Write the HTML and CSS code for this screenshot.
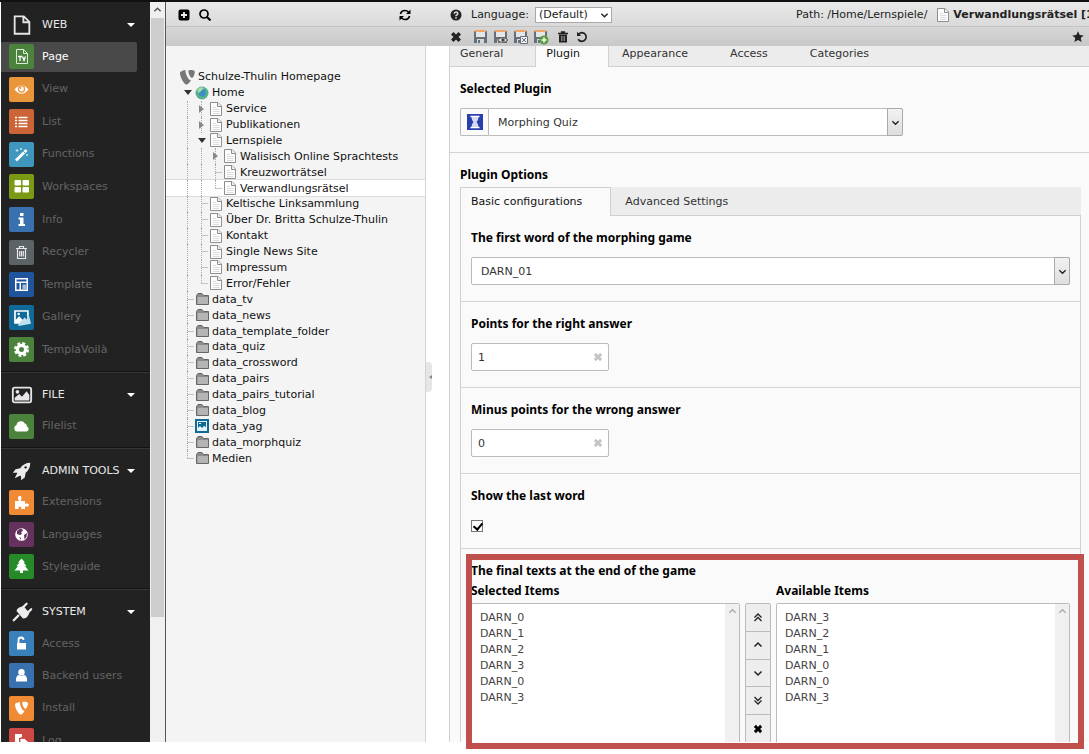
FILE: index.html
```html
<!DOCTYPE html>
<html lang="en">
<head>
    <meta charset="UTF-8">
    <meta name="viewport" content="width=device-width, initial-scale=1.0">
    <title>TYPO3 Backend - Verwandlungsrätsel</title>
    <link rel="stylesheet" href="styles.css">
</head>
<body>
    <svg class="sprite" aria-hidden="true">
        <symbol id="i-page" viewBox="0 0 16 16">
            <path d="M2.500 1.500h7.500L13.500 5v9.500h-11z" fill="#fdfdfd" stroke="#8e8e8e" stroke-width="1"/>
            <path d="M9.500 1.500V5.500H13.500" fill="#eee" stroke="#8e8e8e"/>
            <path d="M5 6.500h3M5 8.500h6.500M5 10.500h6.500M5 12.500h6.500" stroke="#dcdcdc"/>
        </symbol>
        <symbol id="i-folder" viewBox="0 0 16 16">
            <path d="M2.500 13.500V4.500l1.500-2h4l1.500 2h5v9z" fill="#8c8c8c" stroke="#666"/>
            <path d="M3.500 6h10.500v7h-10.500z" fill="#b4b4b4"/>
        </symbol>
        <symbol id="i-typo3" viewBox="0 0 16 16">
            <path d="M11 10.500c-.3.100-.5.100-.8.100-2 0-4.700-6.600-4.700-8.800 0-.8.200-1 .4-1.300C3.500.8 1 1.700.3 2.600c-.2.200-.3.600-.3 1.100C0 7.100 3.800 15 6.500 15c1.300 0 3.300-2 4.500-4.500M9.900.4c2.500 0 4.900.4 4.900 1.800 0 2.800-1.800 6.200-2.700 6.200-1.600 0-3.700-4.500-3.700-6.700 0-1 .4-1.300 1.500-1.300" transform="translate(0 .5)"/>
        </symbol>
        <symbol id="i-x" viewBox="0 0 12 12">
            <path d="M3.500 1L6 3.500 8.500 1 11 3.500 8.500 6 11 8.500 8.500 11 6 8.500 3.500 11 1 8.500 3.500 6 1 3.500z"/>
        </symbol>
        <symbol id="i-up" viewBox="0 0 10 10"><path d="M1.500 6.500L5 3l3.500 3.500" fill="none" stroke="currentColor" stroke-width="1.500"/></symbol>
        <symbol id="i-down" viewBox="0 0 10 10"><path d="M1.500 3.500L5 7l3.500-3.500" fill="none" stroke="currentColor" stroke-width="1.500"/></symbol>
        <symbol id="i-top" viewBox="0 0 10 10"><path d="M1.500 5.500L5 2l3.500 3.500M1.500 9L5 5.500 8.500 9" fill="none" stroke="currentColor" stroke-width="1.300"/></symbol>
        <symbol id="i-bottom" viewBox="0 0 10 10"><path d="M1.500 1L5 4.500 8.500 1M1.500 4.500L5 8l3.500-3.500" fill="none" stroke="currentColor" stroke-width="1.300"/></symbol>
        <symbol id="i-save" viewBox="0 0 16 16">
            <path d="M1 2h13v12H1z" fill="#66707a"/>
            <path d="M3 2h9v6H3z" fill="#e4e6e8"/>
            <path d="M2 1h11v2H2z" fill="#f2a569"/>
            <path d="M4 10h7v4H4z" fill="#d4d7da"/>
            <path d="M5 11h2v3H5z" fill="#66707a"/>
        </symbol>
        <symbol id="i-gallery" viewBox="0 0 16 16">
            <path d="M1 1h13v12H1z" fill="#fff"/>
            <path d="M14 5l2 8-11 2-.5-2z" fill="#bfe0ee"/>
            <path d="M2.500 2.500h10v7l-2-2-2 2-3-3-3 3z" fill="#0f6a97"/>
            <circle cx="5" cy="4.500" r="1.100" fill="#fff"/>
        </symbol>
    </svg>

    <div class="screen">
        <div class="backend">

            <!-- Module menu -->
            <nav class="modules">
                <section class="module-group rows-11">
                    <button type="button" class="group-head">
                        <svg class="group-icon" viewBox="0 0 24 24"><path d="M4 2.500h10l6 6v13H4z M13.500 2.500v6.500h6.500" fill="none" stroke="#e8e4e8" stroke-width="2"/></svg>
                        <span>WEB</span><i class="caret"></i>
                    </button>
                    <a href="#" class="module active">
                        <svg class="module-icon green" viewBox="0 0 25 25"><path d="M7.500 5.500h7l4 4v10h-11z M14.500 5.500v4h4" fill="none" stroke="#dce9d8"/><path d="M9 12.500h4M11 12.500v4.500M13.500 12.500l1.500 4 1.500-4" fill="none" stroke="#fff" stroke-width="1.300"/></svg>
                        Page
                    </a>
                    <a href="#" class="module">
                        <svg class="module-icon orange" viewBox="0 0 25 25"><path d="M5.500 12.500q7-8.500 14 0-7 8.500-14 0z" fill="#fff"/><circle cx="12.500" cy="12" r="3.700" fill="#e8953b"/><circle cx="12.500" cy="12" r="2.400" fill="#fff"/><circle cx="11.500" cy="11" r="1" fill="#e8953b"/></svg>
                        View
                    </a>
                    <a href="#" class="module">
                        <svg class="module-icon rust" viewBox="0 0 25 25"><path d="M6 8.500h2M6 11.500h2M6 14.500h2M6 17.500h2M9.500 8.500h9M9.500 11.500h9M9.500 14.500h9M9.500 17.500h9" stroke="#fff" stroke-width="1.500"/></svg>
                        List
                    </a>
                    <a href="#" class="module">
                        <svg class="module-icon sky" viewBox="0 0 25 25"><path d="M6 17.500L16.500 7l2 2L8 19.500z" fill="#fff"/><path d="M14.200 9.300l2 2" stroke="#4097bd"/><path d="M8 7v3M6.500 8.500h3M12 6v2M11 7h2M18 12v2M17 13h2" stroke="#d8ecf5" stroke-width=".8"/></svg>
                        Functions
                    </a>
                    <a href="#" class="module">
                        <svg class="module-icon lime" viewBox="0 0 25 25"><g fill="#fff"><rect x="5.500" y="6" width="6.500" height="5.500" rx="1"/><rect x="13.500" y="6" width="6.500" height="5.500" rx="1"/><rect x="5.500" y="13" width="6.500" height="5.500" rx="1"/><rect x="13.500" y="13" width="6.500" height="5.500" rx="1"/></g></svg>
                        Workspaces
                    </a>
                    <a href="#" class="module">
                        <svg class="module-icon blue" viewBox="0 0 25 25"><path d="M11 6h3.500v3H11zM9.500 10.500h5V17H16v2H9.500v-2H11v-4.500H9.500z" fill="#fff"/></svg>
                        Info
                    </a>
                    <a href="#" class="module">
                        <svg class="module-icon gray" viewBox="0 0 25 25"><path d="M7 8.500h11M10.500 8V6.500h4V8M8.500 9v9.500h8V9M10.700 11v5.500M12.500 11v5.500M14.300 11v5.500" fill="none" stroke="#e4e6e7" stroke-width="1.200"/></svg>
                        Recycler
                    </a>
                    <a href="#" class="module">
                        <svg class="module-icon navy" viewBox="0 0 25 25"><path d="M6 6h13v13H6z" fill="#fff"/><path d="M7.500 7.500h10v2h-10zM7.500 11h3v6.500h-3zM12 11h5.500v6.500H12z" fill="#1f559c"/><path d="M13.500 12.500h4v5h-4z" fill="#a7c0dd"/></svg>
                        Template
                    </a>
                    <a href="#" class="module">
                        <svg class="module-icon petrol" viewBox="0 0 25 25"><use href="#i-gallery" x="4" y="4" width="18" height="18"/></svg>
                        Gallery
                    </a>
                    <a href="#" class="module">
                        <svg class="module-icon green" viewBox="0 0 25 25"><circle cx="12.500" cy="12.500" r="5.800" fill="#fff"/><circle cx="12.500" cy="12.500" r="6" fill="none" stroke="#fff" stroke-width="3" stroke-dasharray="2.700 2.012"/><circle cx="12.500" cy="12.500" r="2.500" fill="#4b833c"/></svg>
                        TemplaVoilà
                    </a>
                </section>
                <section class="module-group rows-2">
                    <button type="button" class="group-head">
                        <svg class="group-icon" viewBox="0 0 24 24"><rect x="2" y="4" width="20" height="16" rx="2" fill="none" stroke="#e8e4e8" stroke-width="2"/><path d="M4 18v-3l5-4 3 3 5-6 3 4v6z" fill="#e8e4e8"/><circle cx="7" cy="8.500" r="2" fill="#e8e4e8"/></svg>
                        <span>FILE</span><i class="caret"></i>
                    </button>
                    <a href="#" class="module">
                        <svg class="module-icon green" viewBox="0 0 25 25"><path d="M8 17.500a3.300 3.300 0 0 1-.5-6.400 4.500 4.500 0 0 1 8.400-1.600 3 3 0 0 1 2 3A2.600 2.600 0 0 1 17.500 17.500z" fill="#fff"/></svg>
                        Filelist
                    </a>
                </section>
                <section class="module-group rows-4">
                    <button type="button" class="group-head">
                        <svg class="group-icon" viewBox="0 0 24 24"><path d="M21 3q-7 0-11 6l-5 1-3 4 5 0-1 2-2 4 4-2 2-1 1 1v4l4-3 1-5q5-4 5-11z" fill="#ececec"/><circle cx="16" cy="8" r="1.300" fill="#222"/></svg>
                        <span>ADMIN TOOLS</span><i class="caret"></i>
                    </button>
                    <a href="#" class="module">
                        <svg class="module-icon orange2" viewBox="0 0 25 25"><path d="M6 11h4q-1.500-2-1-3.500a1.800 1.800 0 0 1 3.500 0q.3 1.500-1 3.500H16v3.200q1-1 2.200-.8a1.700 1.700 0 0 1 0 3.400Q17 17 16 16v3h-4q.8-2.500-1.200-2.500T9.700 19H6z" fill="#fff"/></svg>
                        Extensions
                    </a>
                    <a href="#" class="module">
                        <svg class="module-icon purple" viewBox="0 0 25 25"><circle cx="12.500" cy="12.500" r="6.300" fill="#fff"/><path d="M8 9q3-3 5-2l1 2-2 1 1 2-2 1-3-1zM15 13l3-2-.5 4-2 2.500zM10 15l2 1v2z" fill="#653260"/></svg>
                        Languages
                    </a>
                    <a href="#" class="module">
                        <svg class="module-icon forest" viewBox="0 0 25 25"><path d="M12.500 4.500l3.500 4h-1.500l3 3.500h-1.500l3.500 4.500h-5.500V19h-3v-2.500H5.500L9 12H7.500l3-3.500H9z" fill="#fff"/></svg>
                        Styleguide
                    </a>
                </section>
                <section class="module-group rows-5">
                    <button type="button" class="group-head">
                        <svg class="group-icon" viewBox="0 0 24 24"><path d="M6 11l7 8q5 0 7-6l-6-7q-7 0-8 5z" fill="#ececec"/><path d="M12 8l5-5M17 14l5-5M8 16l-5 5" stroke="#ececec" stroke-width="2.500" stroke-linecap="round"/></svg>
                        <span>SYSTEM</span><i class="caret"></i>
                    </button>
                    <a href="#" class="module">
                        <svg class="module-icon azure" viewBox="0 0 25 25"><path d="M8 12h9v6.500H8z" fill="#fff"/><path d="M9.500 12V9q0-2.500 2.500-2.500T14.500 9" fill="none" stroke="#fff" stroke-width="1.800"/></svg>
                        Access
                    </a>
                    <a href="#" class="module">
                        <svg class="module-icon blue" viewBox="0 0 25 25"><circle cx="12.500" cy="9.200" r="3.200" fill="#fff"/><path d="M7 18.500q-.5-6 3-6.500 2.500 1.500 5 0 3.500.5 3 6.500z" fill="#fff"/></svg>
                        Backend users
                    </a>
                    <a href="#" class="module">
                        <svg class="module-icon orange2" viewBox="0 0 25 25"><use href="#i-typo3" x="6" y="5" width="14" height="14" fill="#fff"/></svg>
                        Install
                    </a>
                    <a href="#" class="module">
                        <svg class="module-icon red" viewBox="0 0 25 25"><path d="M6 6h7v3l-3 1v6H6z" fill="#fff"/><path d="M11 10.500h4.500l3.500 3V20h-8z" fill="#fff" stroke="#cc4a43" stroke-width=".8"/></svg>
                        Log
                    </a>
                </section>
            </nav>
            <div class="scrollbar">
                <svg class="scroll-up" viewBox="0 0 10 10"><use href="#i-up"/></svg>
                <div class="scroll-thumb"></div>
            </div>

            <!-- Page tree -->
            <aside class="tree-panel">
                <div class="bar bar-top">
                    <button type="button" class="icon-btn" aria-label="New page"><svg viewBox="0 0 12 12"><rect x=".5" y=".5" width="11" height="11" rx="2"/><path d="M6 3v6M3 6h6" stroke="#eee" stroke-width="1.800"/></svg></button>
                    <button type="button" class="icon-btn" aria-label="Filter"><svg viewBox="0 0 12 12"><circle cx="5" cy="5" r="4" fill="none" stroke="#000" stroke-width="1.700"/><path d="M8 8l3.500 3.500" stroke="#000" stroke-width="2"/></svg></button>
                    <button type="button" class="icon-btn push" aria-label="Refresh"><svg viewBox="0 0 12 12"><path d="M1.500 5q.8-3.500 4.500-3.500 2 0 3.500 1.500M10.500 7q-.8 3.500-4.500 3.500-2 0-3.500-1.500" fill="none" stroke="#000" stroke-width="1.700"/><path d="M11.500.5V5H7zM.5 11.500V7H5z"/></svg></button>
                </div>
                <div class="bar bar-bottom"></div>
                <div class="tree-body">
                    <ul class="tree">
                        <li><svg class="node-icon" fill="#777"><use href="#i-typo3"/></svg>Schulze-Thulin Homepage</li>
                        <li><button type="button" class="cell open" aria-label="Collapse"></button><svg class="node-icon" viewBox="0 0 16 16"><circle cx="8" cy="8" r="6.500" fill="#56b089"/><path d="M5 6q3-4 6-1l1 4-3 3-4-2z" fill="#3b8fc4"/><path d="M3 5q3-4 7-2L5 8z" fill="#a5dcae"/></svg>Home</li>
                        <li><i class="cell v"></i><button type="button" class="cell shut v" aria-label="Expand"></button><svg class="node-icon"><use href="#i-page"/></svg>Service</li>
                        <li><i class="cell v"></i><button type="button" class="cell shut v" aria-label="Expand"></button><svg class="node-icon"><use href="#i-page"/></svg>Publikationen</li>
                        <li><i class="cell v"></i><button type="button" class="cell open" aria-label="Collapse"></button><svg class="node-icon"><use href="#i-page"/></svg>Lernspiele</li>
                        <li><i class="cell v"></i><i class="cell v"></i><button type="button" class="cell shut v" aria-label="Expand"></button><svg class="node-icon"><use href="#i-page"/></svg>Walisisch Online Sprachtests</li>
                        <li><i class="cell v"></i><i class="cell v"></i><i class="cell v h"></i><svg class="node-icon"><use href="#i-page"/></svg>Kreuzworträtsel</li>
                        <li class="selected"><i class="cell v"></i><i class="cell v"></i><i class="cell l h"></i><svg class="node-icon"><use href="#i-page"/></svg>Verwandlungsrätsel</li>
                        <li><i class="cell v"></i><i class="cell v h"></i><svg class="node-icon"><use href="#i-page"/></svg>Keltische Linksammlung</li>
                        <li><i class="cell v"></i><i class="cell v h"></i><svg class="node-icon"><use href="#i-page"/></svg>Über Dr. Britta Schulze-Thulin</li>
                        <li><i class="cell v"></i><i class="cell v h"></i><svg class="node-icon"><use href="#i-page"/></svg>Kontakt</li>
                        <li><i class="cell v"></i><i class="cell v h"></i><svg class="node-icon"><use href="#i-page"/></svg>Single News Site</li>
                        <li><i class="cell v"></i><i class="cell v h"></i><svg class="node-icon"><use href="#i-page"/></svg>Impressum</li>
                        <li><i class="cell v"></i><i class="cell l h"></i><svg class="node-icon"><use href="#i-page"/></svg>Error/Fehler</li>
                        <li><i class="cell v h"></i><svg class="node-icon"><use href="#i-folder"/></svg>data_tv</li>
                        <li><i class="cell v h"></i><svg class="node-icon"><use href="#i-folder"/></svg>data_news</li>
                        <li><i class="cell v h"></i><svg class="node-icon"><use href="#i-folder"/></svg>data_template_folder</li>
                        <li><i class="cell v h"></i><svg class="node-icon"><use href="#i-folder"/></svg>data_quiz</li>
                        <li><i class="cell v h"></i><svg class="node-icon"><use href="#i-folder"/></svg>data_crossword</li>
                        <li><i class="cell v h"></i><svg class="node-icon"><use href="#i-folder"/></svg>data_pairs</li>
                        <li><i class="cell v h"></i><svg class="node-icon"><use href="#i-folder"/></svg>data_pairs_tutorial</li>
                        <li><i class="cell v h"></i><svg class="node-icon"><use href="#i-folder"/></svg>data_blog</li>
                        <li><i class="cell v h"></i><svg class="node-icon" viewBox="0 0 16 16"><path d="M1 1h14v14H1z" fill="#0f6a97"/><path d="M3 3h10v10H3z" fill="#e4f3fa"/><path d="M4 4h8v5l-2-1-2 2-2-2-2 2z" fill="#0f6a97"/><path d="M5 5h2v1H5z" fill="#fff"/></svg>data_yag</li>
                        <li><i class="cell v h"></i><svg class="node-icon"><use href="#i-folder"/></svg>data_morphquiz</li>
                        <li><i class="cell l h"></i><svg class="node-icon"><use href="#i-folder"/></svg>Medien</li>
                    </ul>
                </div>
                <button type="button" class="collapse" aria-label="Hide page tree"></button>
            </aside>

            <!-- Record editor -->
            <main class="editor">
                <div class="bar bar-top">
                    <button type="button" class="icon-btn help" aria-label="Help"><svg viewBox="0 0 12 12"><circle cx="6" cy="6" r="5.500" fill="#222"/><path d="M4.200 4.800Q4.300 3 6 3t1.800 1.600Q7.800 5.700 6 6.600V7.300M6 8.200v1.500" fill="none" stroke="#e4e4e4" stroke-width="1.500"/></svg></button>
                    <label for="language">Language:</label>
                    <span class="select-wrap language">
                        <select id="language"><option>(Default)</option></select>
                        <svg class="small-arrow" viewBox="0 0 10 10"><use href="#i-down"/></svg>
                    </span>
                    <div class="path">Path: /Home/Lernspiele/ <svg class="node-icon"><use href="#i-page"/></svg><b>Verwandlungsrätsel [155]</b></div>
                </div>
                <div class="bar bar-bottom">
                    <button type="button" class="icon-btn close" aria-label="Close"><svg fill="#222"><use href="#i-x"/></svg></button>
                    <button type="button" class="tool" aria-label="Save"><svg viewBox="0 0 16 16"><use href="#i-save"/></svg></button>
                    <button type="button" class="tool" aria-label="Save and view"><svg viewBox="0 0 16 16"><use href="#i-save"/><path d="M4.500 11q5-5 10.500 0-5.500 5-10.500 0z" fill="#ddd" stroke="#555"/><circle cx="10" cy="11" r="1.700" fill="#444"/></svg></button>
                    <button type="button" class="tool" aria-label="Save and close"><svg viewBox="0 0 16 16"><use href="#i-save"/><path d="M7.500 7.500h7v7h-7z" fill="#eef0f4" stroke="#66707a"/><path d="M9 9l4 4M13 9l-4 4" stroke="#66707a"/></svg></button>
                    <button type="button" class="tool" aria-label="Save and create new"><svg viewBox="0 0 16 16"><use href="#i-save"/><circle cx="11" cy="11" r="4.500" fill="#5a9e3c"/><path d="M11 8.500v5M8.500 11h5" stroke="#fff" stroke-width="1.500"/></svg></button>
                    <button type="button" class="icon-btn trash" aria-label="Delete"><svg viewBox="0 0 12 12"><path d="M1 2.500h10M4.500 2V1h3v1" fill="none" stroke="#222" stroke-width="1.300"/><path d="M2 3.500h8V11.500H2z" fill="#222"/><path d="M4.500 5v5M6 5v5M7.500 5v5" stroke="#aaa" stroke-width=".7"/></svg></button>
                    <button type="button" class="icon-btn" aria-label="Undo"><svg viewBox="0 0 12 12"><path d="M2.500 3.500Q4 1.700 6 1.700a4.300 4.300 0 1 1-3.800 6.500" fill="none" stroke="#222" stroke-width="1.700"/><path d="M1 .8V5h4.200z" fill="#222"/></svg></button>
                    <button type="button" class="icon-btn push star" aria-label="Bookmark"><svg viewBox="0 0 12 12"><path d="M6 .3l1.700 3.700 4 .4-3 2.700.9 4L6 9l-3.600 2.100.9-4-3-2.700 4-.4z" fill="#222"/></svg></button>
                </div>

                <div class="form">
                    <div class="tabs tabs-main">
                        <a href="#" class="tab">General</a>
                        <a href="#" class="tab current">Plugin</a>
                        <a href="#" class="tab">Appearance</a>
                        <a href="#" class="tab">Access</a>
                        <a href="#" class="tab">Categories</a>
                    </div>
                    <div class="pane pane-main">
                        <div class="field">
                            <label for="plugin">Selected Plugin</label>
                            <div class="input-group">
                                <span class="addon"><svg viewBox="0 0 16 16"><path d="M0 0h16v16H0z" fill="#2a3fae"/><path d="M3.500 2.500h9M3.500 13.500h9" stroke="#fff" stroke-width="1.500"/><path d="M4.500 3h7q0 3-2 5 2 2 2 5h-7q0-3 2-5-2-2-2-5z" fill="#d5daf2"/></svg></span>
                                <span class="select-wrap">
                                    <select id="plugin" class="control"><option>Morphing Quiz</option></select>
                                    <span class="arrow"><svg viewBox="0 0 10 10"><use href="#i-down"/></svg></span>
                                </span>
                            </div>
                        </div>
                        <div class="field options">
                            <h2>Plugin Options</h2>
                            <div class="tabs">
                                <a href="#" class="tab current">Basic configurations</a>
                                <a href="#" class="tab">Advanced Settings</a>
                            </div>
                            <div class="pane">
                                <div class="field">
                                    <label for="first-word">The first word of the morphing game</label>
                                    <span class="select-wrap">
                                        <select id="first-word" class="control"><option>DARN_01</option></select>
                                        <span class="arrow"><svg viewBox="0 0 10 10"><use href="#i-down"/></svg></span>
                                    </span>
                                </div>
                                <div class="field">
                                    <label for="points">Points for the right answer</label>
                                    <div class="clearable">
                                        <input type="text" id="points" class="control" value="1">
                                        <button type="button" class="clear" aria-label="Clear"><svg><use href="#i-x"/></svg></button>
                                    </div>
                                </div>
                                <div class="field">
                                    <label for="minus">Minus points for the wrong answer</label>
                                    <div class="clearable">
                                        <input type="text" id="minus" class="control" value="0">
                                        <button type="button" class="clear" aria-label="Clear"><svg><use href="#i-x"/></svg></button>
                                    </div>
                                </div>
                                <div class="field">
                                    <label for="show-last">Show the last word</label>
                                    <div class="check"><input type="checkbox" id="show-last" checked></div>
                                </div>
                                <div class="field">
                                    <h2>The final texts at the end of the game</h2>
                                    <div class="lists">
                                        <label for="selected">Selected Items</label>
                                        <label for="available" class="available">Available Items</label>
                                        <div class="list">
                                            <select id="selected" multiple>
                                                <option>DARN_0</option>
                                                <option>DARN_1</option>
                                                <option>DARN_2</option>
                                                <option>DARN_3</option>
                                                <option>DARN_0</option>
                                                <option>DARN_3</option>
                                            </select>
                                            <span class="list-scroll"><svg viewBox="0 0 10 10"><use href="#i-up"/></svg></span>
                                        </div>
                                        <div class="move">
                                            <button type="button" aria-label="Move to top"><svg><use href="#i-top"/></svg></button>
                                            <button type="button" aria-label="Move up"><svg><use href="#i-up"/></svg></button>
                                            <button type="button" aria-label="Move down"><svg><use href="#i-down"/></svg></button>
                                            <button type="button" aria-label="Move to bottom"><svg><use href="#i-bottom"/></svg></button>
                                            <button type="button" aria-label="Remove"><svg><use href="#i-x"/></svg></button>
                                        </div>
                                        <div class="list">
                                            <select id="available" multiple>
                                                <option>DARN_3</option>
                                                <option>DARN_2</option>
                                                <option>DARN_1</option>
                                                <option>DARN_0</option>
                                                <option>DARN_0</option>
                                                <option>DARN_3</option>
                                            </select>
                                            <span class="list-scroll"><svg viewBox="0 0 10 10"><use href="#i-up"/></svg></span>
                                        </div>
                                    </div>
                                </div>
                            </div>
                        </div>
                    </div>
                </div>
            </main>
        </div>
        <div class="highlight"></div>
    </div>
</body>
</html>
```
FILE: styles.css
```css
* {
    box-sizing: border-box;
}

body {
    margin: 0;
    background: #fff;
    font-family: "DejaVu Sans", Verdana, sans-serif;
    font-size: 11px;
    line-height: 16px;
    color: #222;
}

button,
input,
select {
    font: inherit;
    color: inherit;
    margin: 0;
}

button {
    padding: 0;
    border: none;
    background: none;
    cursor: pointer;
}

.sprite {
    display: none;
}

.screen {
    position: relative;
    height: 100vh;
    overflow: hidden;
    border-top: 2px solid #111;
}

.backend {
    display: flex;
    height: calc(100% - 12px);
    overflow: hidden;
}

/* Module menu */
.modules {
    flex: 0 0 149px;
    margin-left: 1px;
    background: #222;
    overflow: hidden;
}

.module-group {
    display: grid;
    grid-auto-rows: 1fr;
    padding: 5px 0;
    border-top: 1px solid #363636;
    border-bottom: 1px solid #141414;
}

.module-group:first-child {
    border-top: none;
    padding-top: 6px;
}

.rows-11 {
    height: 370px;
}

.rows-2 {
    height: 76px;
}

.rows-4 {
    height: 141px;
}

.rows-5 {
    height: 174px;
}

.group-head {
    display: flex;
    align-items: center;
    gap: 8px;
    padding: 2px 15px 0 9px;
    color: #e8e8e8;
    text-align: left;
    white-space: nowrap;
}

.group-icon {
    flex: none;
    width: 24px;
    height: 22px;
}

.caret {
    margin-left: auto;
    border: 4px solid transparent;
    border-top-color: #fff;
    border-bottom: none;
}

.group-head .caret {
    margin-left: auto;
}

.group-head span {
    margin-right: -8px;
}

.module {
    display: flex;
    align-items: center;
    gap: 8px;
    margin: 1px 13px 1px 0;
    padding-left: 8px;
    border-radius: 0 2px 2px 0;
    color: #646464;
    text-decoration: none;
}

.module.active {
    background: #494949;
    color: #fff;
}

.module-icon {
    width: 25px;
    height: 25px;
    border-radius: 2px;
}

.green { background: #4b833c; }
.orange { background: #e8953b; }
.orange2 { background: #f08a35; }
.rust { background: #cb6436; }
.sky { background: #4097bd; }
.lime { background: #7b9a14; }
.blue { background: #3970ae; }
.gray { background: #5c6366; }
.navy { background: #1f559c; }
.petrol { background: #0f6a97; }
.purple { background: #653260; }
.forest { background: #258a27; }
.azure { background: #3a80bb; }
.red { background: #cc4a43; }

.scrollbar {
    flex: 0 0 15px;
    display: flex;
    flex-direction: column;
    align-items: center;
    background: #f0f0f0;
}

.scroll-up {
    flex: none;
    width: 9px;
    height: 16px;
    color: #555;
}

.scroll-thumb {
    width: 13px;
    height: 81%;
    background: #cdcdcd;
}

/* Header bars of both panels */
.bar {
    display: flex;
    align-items: center;
}

.bar-top {
    height: 25px;
    padding: 2px 14px 0 12px;
    border-bottom: 1px solid #c4c4c4;
    background: linear-gradient(#e9e9e9, #dadada);
}

.bar-bottom {
    height: 19px;
    background: linear-gradient(#d6d6d6, #c8c8c8);
}

.icon-btn,
.icon-btn svg {
    display: block;
    width: 12px;
    height: 12px;
}

.push {
    margin-left: auto;
}

/* Page tree */
.tree-panel {
    position: relative;
    display: flex;
    flex-direction: column;
    flex: 0 0 262px;
    border-left: 1px solid #555;
    background: #fff;
}

.tree-panel .bar-top {
    gap: 9px;
    padding-right: 16px;
}

.tree-body {
    flex: 1;
    width: 260px;
    padding-top: 23px;
    border-right: 1px solid #d4d4d4;
    background: #f4f4f4;
}

.tree {
    display: grid;
    grid-auto-rows: 1fr;
    height: 397px;
    margin: 0;
    padding: 0;
    list-style: none;
    line-height: 15px;
    color: #111;
}

.tree li {
    display: flex;
    align-items: center;
    padding-left: 14px;
    white-space: nowrap;
}

.tree .selected {
    background: #fff;
    box-shadow: 0 -1px #ddd, 0 1px #ddd;
}

.node-icon {
    flex: none;
    width: 16px;
    height: 16px;
    margin: -1px 2px -1px 0;
}

.cell {
    position: relative;
    flex: 0 0 14px;
    align-self: stretch;
}

.v::before,
.l::before {
    content: "";
    position: absolute;
    left: 7px;
    top: 0;
    bottom: 0;
    border-left: 1px dotted #aaa;
}

.l::before {
    bottom: 50%;
}

.h {
    background: linear-gradient(90deg, transparent 50%, #c4c4c4 50%) center / 100% 1px no-repeat;
}

.open::after,
.shut::after {
    content: "";
    position: absolute;
    left: 4px;
    top: 5px;
    border: 4px solid transparent;
}

.open::after {
    border-top: 5px solid #333;
    border-bottom: none;
}

.shut::after {
    left: 5px;
    top: 4px;
    border-left: 5px solid #888;
    border-right: none;
}

.collapse {
    position: absolute;
    right: -5px;
    top: 360px;
    width: 6px;
    height: 30px;
    border-radius: 0 4px 4px 0;
    background: #e6e6e6;
}

.collapse::after {
    content: "";
    display: block;
    border: 2px solid transparent;
    border-right: 3px solid #888;
    border-left: none;
}

/* Record editor */
.editor {
    flex: 1;
    min-width: 0;
    overflow: hidden;
}

.editor .bar-top {
    padding: 2px 0 0 23px;
}

.editor .bar-bottom {
    padding: 0 5px 0 23px;
}

.help {
    margin-right: 9px;
}

.select-wrap {
    position: relative;
    display: block;
}

select {
    appearance: none;
    border: 1px solid #aaa;
    background: #fff;
}

.language {
    width: 77px;
    margin-left: 6px;
}

.language select {
    display: block;
    width: 100%;
    height: 16px;
    padding: 0 3px;
    line-height: 14px;
}

.small-arrow {
    position: absolute;
    right: 3px;
    top: 3px;
    width: 9px;
    height: 10px;
    pointer-events: none;
}

.path {
    display: flex;
    flex: 0 0 293px;
    align-items: center;
    margin-left: auto;
    overflow: hidden;
    white-space: nowrap;
}

.path .node-icon {
    margin-left: 8px;
}

.close {
    margin-right: 11px;
}

.tool {
    width: 20px;
    height: 16px;
}

.tool svg {
    display: block;
    width: 16px;
    height: 16px;
}

.trash {
    margin: 0 7px 0 4px;
}

.form {
    padding-left: 22px;
}

.tabs {
    display: flex;
    gap: 3px;
    height: 28px;
    background: #ececec;
}

.tab {
    padding: 7px 28px 0 11px;
    border-right: 1px solid transparent;
    color: #333;
    text-decoration: none;
}

.tab.current {
    z-index: 1;
    margin-bottom: -1px;
    padding-top: 6px;
    padding-left: 10px;
    border: 1px solid #d0d0d0;
    border-bottom: none;
    background: #fafafa;
    color: #111;
}

.tabs-main {
    height: 20px;
    border-left: 1px solid #d8d8d8;
}

.tabs-main .tab {
    padding-top: 0;
    padding-left: 10px;
}

.tabs-main .tab.current {
    padding-top: 0;
    border-top: none;
}

.pane {
    border: 1px solid #d0d0d0;
    background: #fafafa;
}

.pane-main {
    border-right: none;
}

.field {
    padding: 14px 10px 16px;
    border-top: 1px solid #d4d4d4;
}

.field:first-child {
    border-top: none;
}

.field label,
.field h2 {
    display: block;
    margin: 0 0 11px;
    font-family: "Noto Sans", "DejaVu Sans", sans-serif;
    font-size: 12px;
    font-weight: bold;
    color: #000;
}

.options {
    padding-right: 8px;
}

.field h2 {
    margin-bottom: 4px;
}

.control {
    display: block;
    width: 100%;
    height: 28px;
    padding: 2px 9px 0;
    border: 1px solid #bbb;
    border-radius: 2px;
    background: #fff;
    color: #333;
}

.arrow {
    position: absolute;
    top: 0;
    right: 0;
    display: flex;
    align-items: center;
    justify-content: center;
    width: 16px;
    height: 28px;
    border: 1px solid #aaa;
    border-radius: 0 2px 2px 0;
    background: linear-gradient(#f2f2f2, #dedede);
    pointer-events: none;
}

.arrow svg {
    width: 9px;
    height: 9px;
}

.input-group {
    display: flex;
    max-width: 443px;
}

.input-group .select-wrap {
    flex: 1;
}

.input-group .control {
    border-radius: 0 2px 2px 0;
}

.addon {
    display: flex;
    align-items: center;
    justify-content: center;
    width: 28px;
    border: 1px solid #bbb;
    border-right: none;
    border-radius: 2px 0 0 2px;
}

.addon svg {
    width: 16px;
    height: 16px;
}

.clearable {
    position: relative;
    width: 138px;
}

.clearable .control {
    padding: 1px 24px 0 6px;
}

.clear {
    position: absolute;
    right: 6px;
    top: 9px;
}

.clear svg {
    display: block;
    width: 10px;
    height: 10px;
    fill: #c4c4c4;
}

.check {
    display: flex;
    align-items: flex-end;
    height: 17px;
}

.check input {
    appearance: none;
    width: 12px;
    height: 12px;
    border: 1px solid #777;
    background: #fff;
}

.check input:checked::after {
    content: "";
    display: block;
    width: 4px;
    height: 7px;
    margin: 0 0 0 3px;
    border: solid #000;
    border-width: 0 2px 2px 0;
    transform: rotate(40deg);
}

.lists {
    display: grid;
    grid-template-columns: 269fr 26px 294fr;
    column-gap: 5px;
}

.lists label {
    margin-bottom: 4px;
}

.available {
    grid-column: 3;
}

.list {
    position: relative;
}

.list select {
    display: block;
    width: 100%;
    height: 160px;
    padding: 7px 8px;
    border: 1px solid #bbb;
    overflow: hidden;
    color: #444;
}

.list option {
    min-height: 16px;
    padding: 0;
    line-height: 16px;
}

.list-scroll {
    position: absolute;
    top: 1px;
    right: 1px;
    bottom: 1px;
    width: 14px;
    padding-top: 3px;
    background: #f0f0f0;
    color: #aaa;
    text-align: center;
    line-height: 9px;
}

.list-scroll svg {
    width: 9px;
    height: 9px;
}

.move {
    display: flex;
    flex-direction: column;
    height: 140px;
    border: 1px solid #bbb;
    border-radius: 2px;
    background: #ededed;
}

.move button {
    display: flex;
    flex: 1;
    align-items: center;
    justify-content: center;
}

.move button + button {
    border-top: 1px solid #bbb;
}

.move svg {
    width: 10px;
    height: 10px;
}

/* Marker frame over the item lists */
.highlight {
    position: absolute;
    top: 552px;
    right: 5px;
    bottom: 5px;
    left: 466px;
    border: 6px solid #c0504d;
    pointer-events: none;
}
```
